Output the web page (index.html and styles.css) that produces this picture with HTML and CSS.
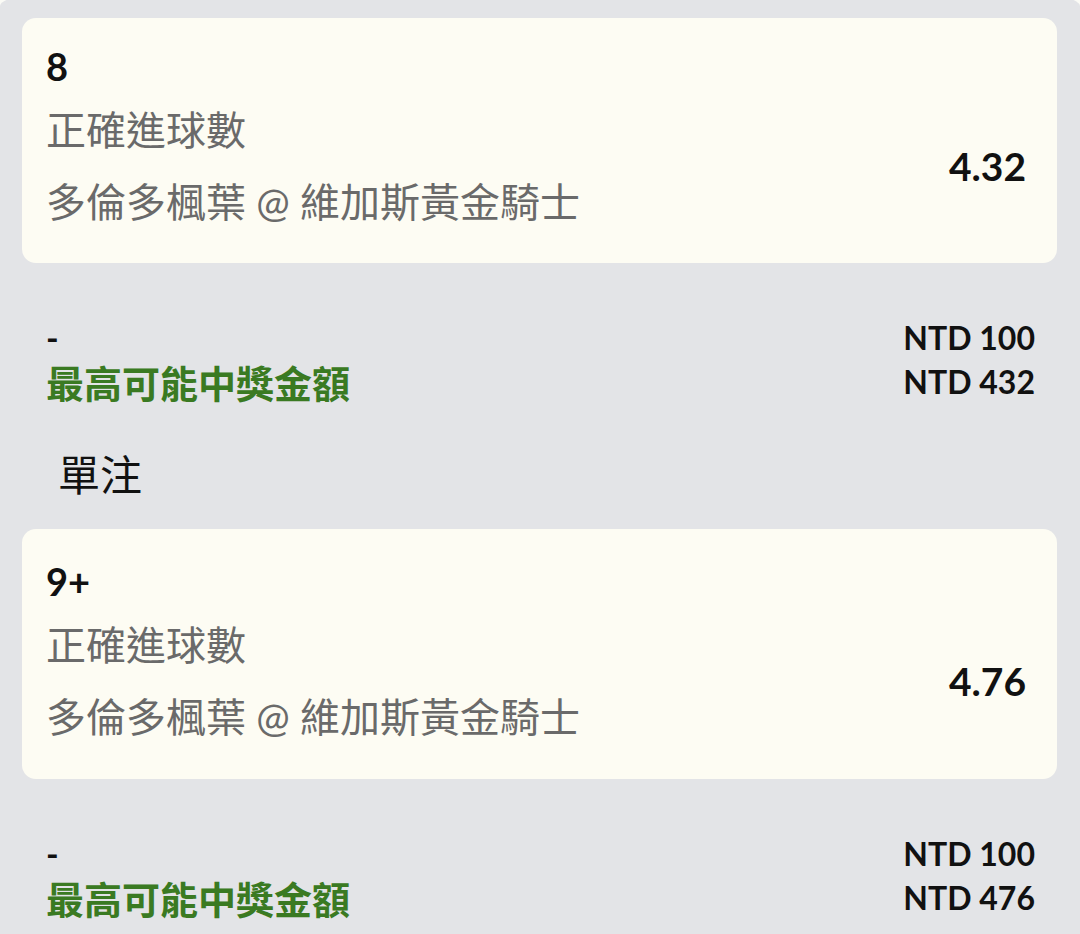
FILE: index.html
```html
<!DOCTYPE html>
<html lang="zh-Hant">
<head>
	<meta charset="UTF-8">
	<title>單注</title>
<link rel="stylesheet" href="styles.css">
</head>

<body>
<div class="slip">
	<div class="bet_card first">
		<div class="sel">8</div>
		<div class="bet_body">
			<div class="bet_info">
				<div class="market">正確進球數</div>
				<div class="match">多倫多楓葉 @ 維加斯黃金騎士</div>
			</div>
			<div class="odds">4.32</div>
		</div>
	</div>
	<div class="summary">
		<div class="sum_row">
			<span class="stake">-</span>
			<span class="amount">NTD 100</span>
		</div>
		<div class="sum_row">
			<span class="win">最高可能中獎金額</span>
			<span class="amount">NTD 432</span>
		</div>
	</div>

	<h2 class="section">單注</h2>

	<div class="bet_card single">
		<div class="sel">9+</div>
		<div class="bet_body">
			<div class="bet_info">
				<div class="market">正確進球數</div>
				<div class="match">多倫多楓葉 @ 維加斯黃金騎士</div>
			</div>
			<div class="odds">4.76</div>
		</div>
	</div>
	<div class="summary">
		<div class="sum_row">
			<span class="stake">-</span>
			<span class="amount">NTD 100</span>
		</div>
		<div class="sum_row">
			<span class="win">最高可能中獎金額</span>
			<span class="amount">NTD 476</span>
		</div>
	</div>
</div>
</body>
</html>
```

FILE: styles.css
```css
* { margin:0; padding:0; box-sizing:border-box;}
html, body { height:100%;}
body { background:#fbfbf6; font-family:Lato, "Noto Sans CJK TC", sans-serif; color:#111; overflow:hidden;}

/* grey sheet, its rounded top just above the window */
.slip { background:#e3e4e7; min-height:calc(100% + 6px); margin-top:-6px; padding:24px 23px 0 22px; border-radius:48px 48px 0 0 / 12px 12px 0 0;}

.bet_card { background:#fdfcf3; border-radius:14px; padding:20px 31px 25px 24px; margin-top:26px;}
.bet_card.first { margin-top:0;}
.bet_card.single { padding-top:24px; padding-bottom:26px;}

.sel { font-size:38px; font-weight:700; line-height:56px;}
.bet_body { display:flex; align-items:center; justify-content:space-between;}
.market, .match { font-size:40px; line-height:72px; color:#6a6a6a;}
.odds { font-size:39px; font-weight:700; line-height:48px;}

.summary { padding:52px 22px 0 24px;}
.sum_row { display:flex; justify-content:space-between; align-items:center; height:44px;}
.stake { font-size:34px; font-weight:700;}
.amount { font-size:32px; font-weight:700;}
.win { font-size:38px; font-weight:700; color:#3a7a22;}

.section { font-size:42px; font-weight:400; line-height:56px; margin-top:44px; padding-left:36px;}
```
